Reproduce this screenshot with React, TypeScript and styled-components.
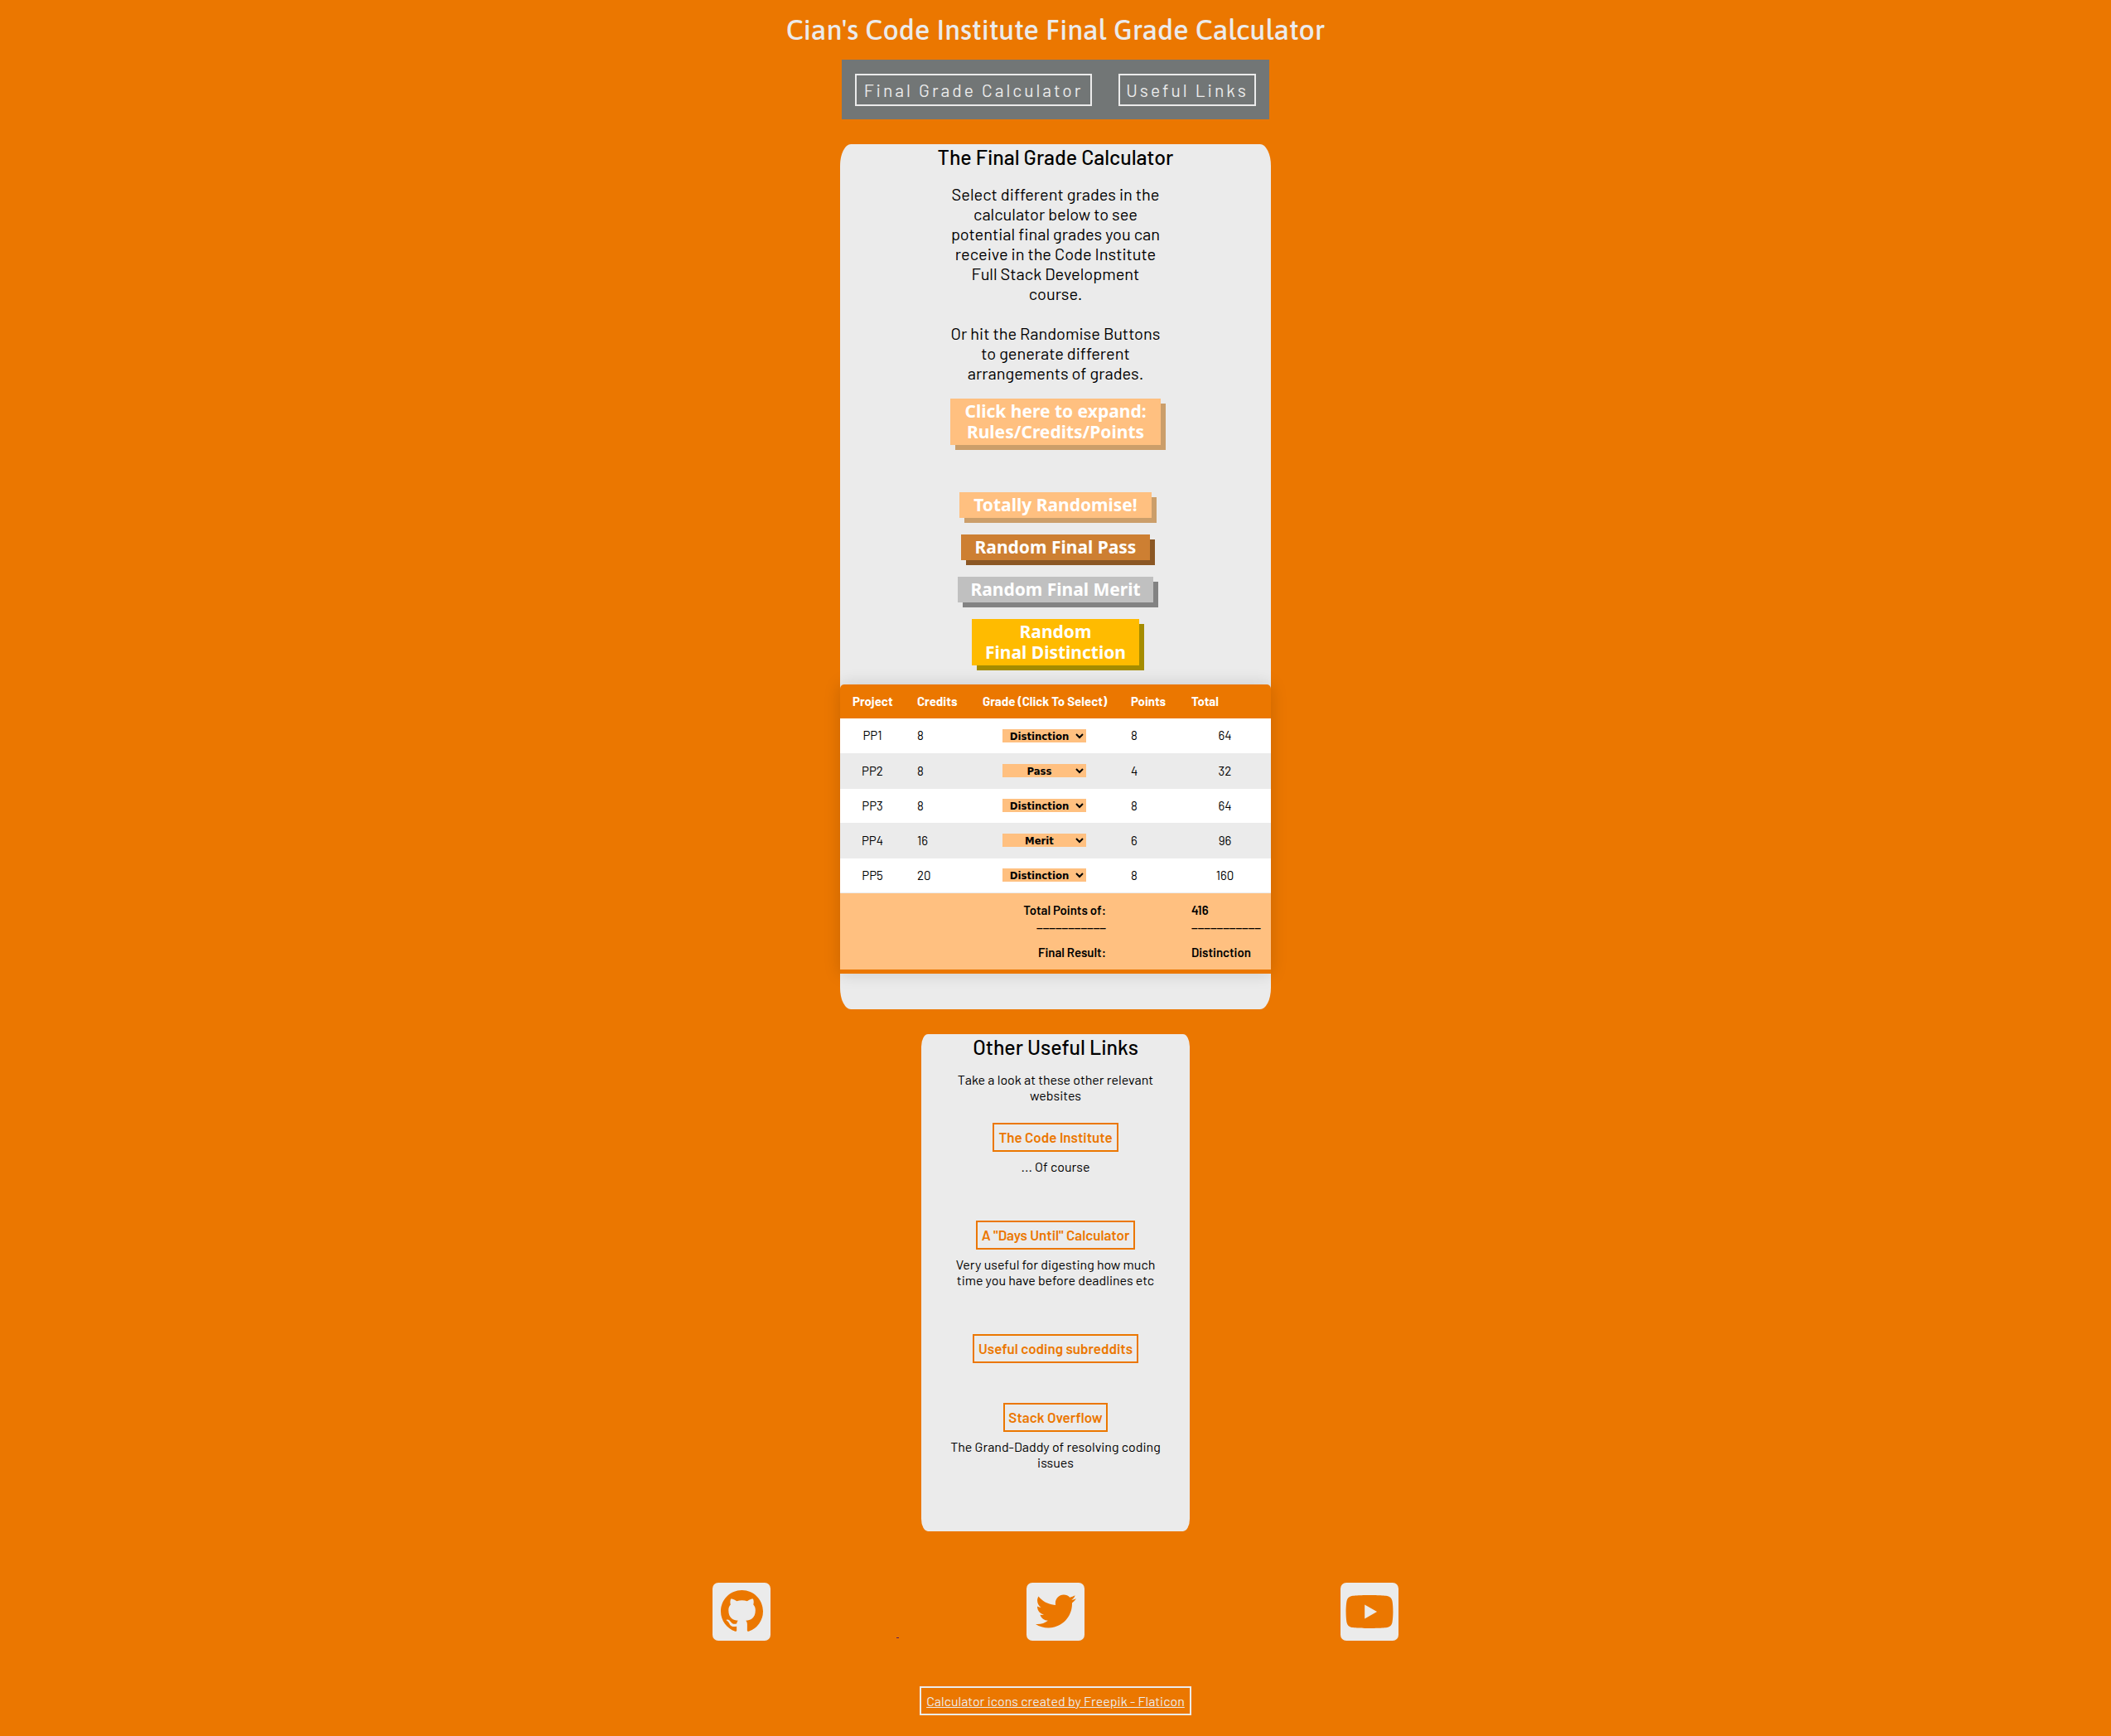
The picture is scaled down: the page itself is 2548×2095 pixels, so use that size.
import React, { useState } from "react";
import styled, { createGlobalStyle } from "styled-components";
import { FaTwitter, FaYoutube } from "react-icons/fa";

const orange = "#eb7700";
const pale = "#ebebeb";
const peach = "#ffc080";
const body = `Barlow, Roboto, "Liberation Sans", sans-serif`;
const heavy = `"Noto Sans", "Open Sans", sans-serif`;
const compact = `"DejaVu Sans Condensed", "DejaVu Sans", sans-serif`;

const GlobalStyle = createGlobalStyle`
  * { box-sizing: border-box; margin: 0; padding: 0; }
  body { background: ${orange}; color: #000; font: 16px/19px ${body}; text-align: center; }
`;

const Page = styled.div`
  display: flex;
  flex-direction: column;
  align-items: center;
  padding-bottom: 24px;
`;

const Title = styled.h1`
  padding: 16px 0;
  color: ${pale};
  font: 500 34px/40px Asap, "Noto Sans", sans-serif;
`;

const Nav = styled.nav`
  display: flex;
  gap: 32px;
  padding: 17px 16px 16px;
  background: #727676;
`;

const NavLink = styled.a<{ $width: number }>`
  min-width: ${(p) => p.$width}px;
  padding: 5px 6px;
  border: 2px solid ${pale};
  color: ${pale};
  font-size: 21px;
  line-height: 25px;
  letter-spacing: 3px;
  white-space: nowrap;
  text-decoration: none;
`;

const Card = styled.section<{ $width: number; $bottom: number }>`
  display: flex;
  flex-direction: column;
  align-items: center;
  width: ${(p) => p.$width}px;
  max-width: 100%;
  margin-top: 30px;
  padding-bottom: ${(p) => p.$bottom}px;
  border-radius: 2.5%;
  background: ${pale};
`;

const Heading = styled.h2`
  margin-bottom: 18px;
  font-size: 25px;
  line-height: 30px;
  font-weight: 500;
`;

const Intro = styled.p`
  width: 260px;
  margin-bottom: 24px;
  font-size: 20px;
  line-height: 24px;
`;

const Buttons = styled.div<{ $top: number }>`
  display: flex;
  flex-direction: column;
  align-items: center;
  gap: 20px;
  margin-top: ${(p) => p.$top}px;
`;

const Button = styled.button<{ $face: string; $shade: string; $width: number }>`
  min-width: ${(p) => p.$width}px;
  padding: 3px 12px;
  border: 0;
  background: ${(p) => p.$face};
  box-shadow: 6px 6px ${(p) => p.$shade};
  color: #fff;
  font: bold 21px/25px ${heavy};
  cursor: pointer;
`;

const Table = styled.table`
  width: 100%;
  margin-top: 23px;
  border-collapse: collapse;
  table-layout: fixed;
  border-radius: 5px 5px 0 0;
  overflow: hidden;
  box-shadow: 0 0 20px rgba(0, 0, 0, 0.15);
  font-size: 15px;
  line-height: 17px;
  text-align: left;

  thead tr { background: ${orange}; color: #fff; }
  th, td { padding: 12px 0 12px 15px; white-space: nowrap; }
  th { font-weight: 700; }
  tbody tr { border-bottom: 1px solid ${pale}; background: #fff; }
  tbody tr:nth-of-type(even) { background: ${pale}; }
  tbody td { height: 42px; }
  tfoot tr { background: ${peach}; border-bottom: 5px solid ${orange}; font-weight: 600; }
`;

const Mid = styled.td`
  && { padding-left: 0; text-align: center; }
`;

const FootLabel = styled.td`
  && { padding-right: 15px; text-align: right; }
`;

const Select = styled.select`
  display: block;
  width: 101px;
  height: 16px;
  margin: 0 auto;
  border: 0;
  background: ${peach};
  color: #000;
  font: bold 13px/16px ${compact};
  text-align: center;
`;

const Entry = styled.div<{ $gap: number }>`
  display: flex;
  flex-direction: column;
  align-items: center;
  gap: 8px;
  width: 260px;
  margin-top: ${(p) => p.$gap}px;
`;

const BoxLink = styled.a<{ $width: number }>`
  min-width: ${(p) => p.$width}px;
  padding: 6px 4px;
  border: 2px solid ${orange};
  color: ${orange};
  font-size: 17px;
  font-weight: 600;
  white-space: nowrap;
  text-decoration: none;
`;

const CreditLink = styled(BoxLink)`
  margin-top: 55px;
  border-color: ${pale};
  color: ${pale};
  font-size: 16px;
  font-weight: 400;
  text-decoration: underline;
`;

const Socials = styled.footer`
  display: grid;
  grid-template-columns: repeat(3, 379px);
  margin-top: 62px;
`;

const Social = styled.div`
  display: grid;
  grid-template-columns: 1fr auto 1fr;
  align-items: end;
`;

const Tile = styled.a<{ $size: number }>`
  display: flex;
  grid-column: 2;
  align-items: center;
  justify-content: center;
  width: 70px;
  height: 70px;
  border-radius: 7px;
  background: ${pale};
  color: ${orange};

  svg { width: ${(p) => p.$size}px; height: ${(p) => p.$size}px; }
`;

const Tick = styled.span`
  justify-self: end;
  width: 3px;
  height: 1px;
  margin-bottom: 3px;
  background: #551a5b;
`;

const GitHubMark = () => (
  <svg viewBox="0 0 16 16" fill="currentColor" aria-hidden="true">
    <path d="M8 0C3.58 0 0 3.58 0 8c0 3.54 2.29 6.53 5.47 7.59.4.07.55-.17.55-.38 0-.19-.01-.82-.01-1.49-2.01.37-2.53-.49-2.69-.94-.09-.23-.48-.94-.82-1.13-.28-.15-.68-.52-.01-.53.63-.01 1.08.58 1.23.82.72 1.21 1.87.87 2.33.66.07-.52.28-.87.51-1.07-1.78-.2-3.64-.89-3.64-3.95 0-.87.31-1.59.82-2.15-.08-.2-.36-1.02.08-2.12 0 0 .67-.21 2.2.82.64-.18 1.32-.27 2-.27s1.36.09 2 .27c1.53-1.04 2.2-.82 2.2-.82.44 1.1.16 1.92.08 2.12.51.56.82 1.27.82 2.15 0 3.07-1.87 3.75-3.65 3.95.29.25.54.73.54 1.48 0 1.07-.01 1.93-.01 2.2 0 .21.15.46.55.38A8.01 8.01 0 0 0 16 8c0-4.42-3.58-8-8-8" />
  </svg>
);

const values: Record<string, number> = { Distinction: 8, Merit: 6, Pass: 4 };
const projects = [
  { name: "PP1", credits: 8 },
  { name: "PP2", credits: 8 },
  { name: "PP3", credits: 8 },
  { name: "PP4", credits: 16 },
  { name: "PP5", credits: 20 },
];

const columns = [78, 79, 179, 73, 111];

const links = [
  { label: "The Code Institute", note: "... Of course", width: 152, gap: 24 },
  { label: 'A "Days Until" Calculator', note: "Very useful for digesting how much time you have before deadlines etc", width: 192, gap: 56 },
  { label: "Useful coding subreddits", note: "", width: 200, gap: 56 },
  { label: "Stack Overflow", note: "The Grand-Daddy of resolving coding issues", width: 126, gap: 48 },
];

const randomGrade = () => Object.keys(values)[Math.floor(Math.random() * 3)];

export default function App() {
  const [grades, setGrades] = useState(["Distinction", "Pass", "Distinction", "Merit", "Distinction"]);
  const fill = (grade?: string) => setGrades(projects.map(() => grade ?? randomGrade()));
  const total = projects.reduce((sum, p, i) => sum + p.credits * values[grades[i]], 0);
  const result = total >= 416 ? "Distinction" : total >= 320 ? "Merit" : "Pass";

  return (
    <Page>
      <GlobalStyle />
      <Title>Cian's Code Institute Final Grade Calculator</Title>
      <Nav>
        <NavLink href="#calculator" $width={286}>Final Grade Calculator</NavLink>
        <NavLink href="#links" $width={166}>Useful Links</NavLink>
      </Nav>

      <Card id="calculator" $width={520} $bottom={43}>
        <Heading>The Final Grade Calculator</Heading>
        <Intro>
          Select different grades in the calculator below to see potential final grades you can receive in the Code
          Institute Full Stack Development course.
        </Intro>
        <Intro>Or hit the Randomise Buttons to generate different arrangements of grades.</Intro>
        <Buttons $top={-5}>
          <Button $face={peach} $shade="#cb9e6a" $width={254}>
            Click here to expand:
            <br />
            Rules/Credits/Points
          </Button>
        </Buttons>
        <Buttons $top={57}>
          <Button $face={peach} $shade="#cb9e6a" $width={232} onClick={() => fill()}>Totally Randomise!</Button>
          <Button $face="#cd7f32" $shade="#8b5724" $width={228} onClick={() => fill("Pass")}>Random Final Pass</Button>
          <Button $face="#c0c0c0" $shade="#838383" $width={236} onClick={() => fill("Merit")}>Random Final Merit</Button>
          <Button $face="#ffbb00" $shade="#a58c00" $width={202} onClick={() => fill("Distinction")}>
            Random
            <br />
            Final Distinction
          </Button>
        </Buttons>
        <Table>
          <colgroup>
            {columns.map((width) => (
              <col key={width} width={width} />
            ))}
          </colgroup>
          <thead>
            <tr>
              <th>Project</th>
              <th>Credits</th>
              <th>Grade (Click To Select)</th>
              <th>Points</th>
              <th>Total</th>
            </tr>
          </thead>
          <tbody>
            {projects.map((p, i) => (
              <tr key={p.name}>
                <Mid>{p.name}</Mid>
                <td>{p.credits}</td>
                <Mid>
                  <Select
                    aria-label={`${p.name} grade`}
                    value={grades[i]}
                    onChange={(e) => setGrades(grades.map((g, j) => (j === i ? e.target.value : g)))}
                  >
                    {Object.keys(values).map((g) => (
                      <option key={g}>{g}</option>
                    ))}
                  </Select>
                </Mid>
                <td>{values[grades[i]]}</td>
                <Mid>{p.credits * values[grades[i]]}</Mid>
              </tr>
            ))}
          </tbody>
          <tfoot>
            <tr>
              <td />
              <td />
              <FootLabel>
                Total Points of:
                <br />
                ___________
                <br />
                <br />
                Final Result:
              </FootLabel>
              <td />
              <td>
                {total}
                <br />
                ___________
                <br />
                <br />
                {result}
              </td>
            </tr>
          </tfoot>
        </Table>
      </Card>

      <Card id="links" $width={324} $bottom={74}>
        <Heading>Other Useful Links</Heading>
        <Entry as="p" $gap={-3}>Take a look at these other relevant websites</Entry>
        {links.map((l) => (
          <Entry key={l.label} $gap={l.gap}>
            <BoxLink href="#links" $width={l.width}>{l.label}</BoxLink>
            {l.note && <p>{l.note}</p>}
          </Entry>
        ))}
      </Card>

      <Socials>
        <Social>
          <Tile href="#github" aria-label="GitHub" $size={51}><GitHubMark /></Tile>
          <Tick />
        </Social>
        <Social>
          <Tile href="#twitter" aria-label="Twitter" $size={49}><FaTwitter /></Tile>
        </Social>
        <Social>
          <Tile href="#youtube" aria-label="YouTube" $size={60}><FaYoutube /></Tile>
        </Social>
      </Socials>
      <CreditLink href="#credits" $width={328}>Calculator icons created by Freepik - Flaticon</CreditLink>
    </Page>
  );
}
